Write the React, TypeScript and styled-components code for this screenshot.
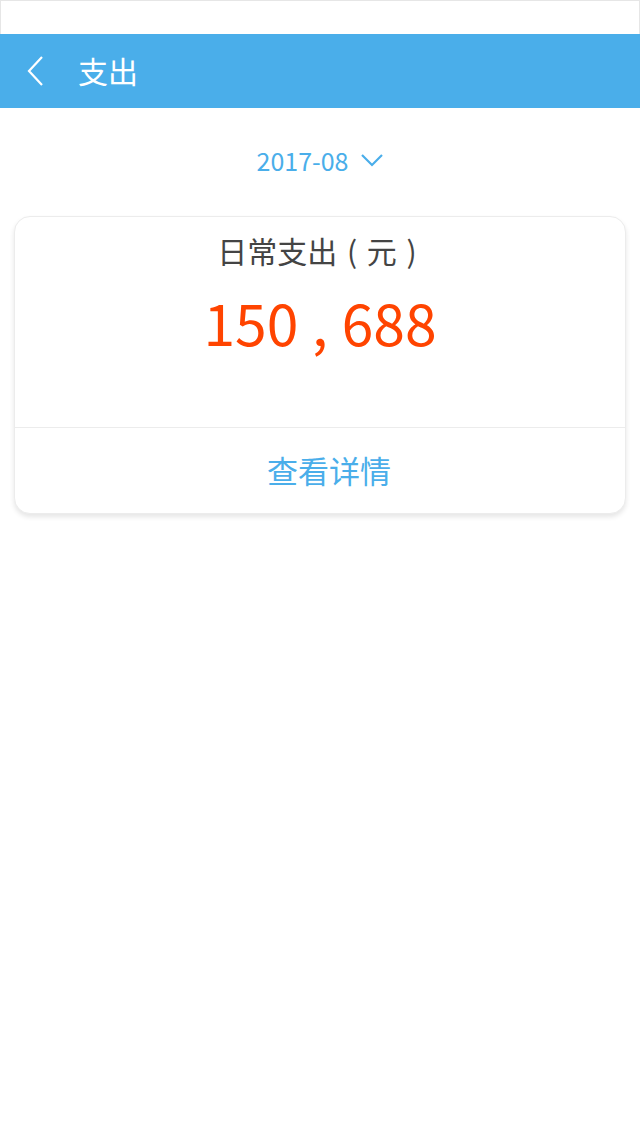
import React from "react";
import styled, { createGlobalStyle } from "styled-components";

const GlobalStyle = createGlobalStyle`
  html, body {
    margin: 0;
    padding: 0;
    background: #ffffff;
  }
  body {
    font-family: "Noto Sans CJK SC", "Noto Sans", sans-serif;
  }
`;

const Page = styled.div`
  width: 640px;
  min-height: 1136px;
  background: #ffffff;
  display: flex;
  flex-direction: column;
`;

const StatusBar = styled.div`
  height: 34px;
  box-sizing: border-box;
  border: 1px solid #e6e6e6;
  border-bottom: none;
  background: #ffffff;
`;

const Header = styled.div`
  height: 74px;
  background: #4aaeea;
  display: flex;
  align-items: center;
  padding-left: 26px;
  color: #ffffff;
`;

const BackButton = styled.div`
  width: 20px;
  height: 34px;
  display: flex;
  align-items: center;
`;

const Title = styled.div`
  margin-left: 32px;
  font-size: 30px;
  line-height: 1;
  margin-top: -2px;
`;

const DateRow = styled.div`
  height: 104px;
  padding-bottom: 4px;
  display: flex;
  align-items: center;
  justify-content: center;
  gap: 13px;
  color: #4aaeea;
  font-size: 25px;
`;

const DateText = styled.span`
  font-family: "Noto Sans CJK SC", sans-serif;
`;

const Card = styled.div`
  margin: 0 14px;
  border-radius: 16px;
  background: #ffffff;
  border: 1px solid #ececec;
  box-shadow: 0 3px 5px rgba(0, 0, 0, 0.1);
  display: flex;
  flex-direction: column;
  overflow: hidden;
`;

const CardBody = styled.div`
  height: 210px;
  display: flex;
  flex-direction: column;
  align-items: center;
  border-bottom: 1px solid #ececec;
`;

const CardLabel = styled.div`
  margin-top: 11px;
  font-size: 30px;
  line-height: 44px;
  color: #444444;
  white-space: pre;
  word-spacing: 3px;
  padding-right: 6px;
`;

const Amount = styled.div`
  margin-top: 17px;
  font-size: 57px;
  line-height: 64px;
  color: #ff4400;
  white-space: pre;
  word-spacing: 1px;
`;

const DetailLink = styled.div`
  height: 82px;
  display: flex;
  align-items: center;
  justify-content: center;
  font-size: 31px;
  color: #4aaeea;
  padding-left: 18px;
  padding-bottom: 3px;
`;

const App = () => {
  return (
    <Page>
      <GlobalStyle />
      <StatusBar />
      <Header>
        <BackButton>
          <svg width="18" height="32" viewBox="0 0 18 32">
            <polyline
              points="16,2 3,16 16,30"
              fill="none"
              stroke="#ffffff"
              strokeWidth="2.2"
            />
          </svg>
        </BackButton>
        <Title>支出</Title>
      </Header>
      <DateRow>
        <DateText>2017-08</DateText>
        <svg width="22" height="14" viewBox="0 0 22 14">
          <polyline
            points="1,2 11,12 21,2"
            fill="none"
            stroke="#4aaeea"
            strokeWidth="2.2"
          />
        </svg>
      </DateRow>
      <Card>
        <CardBody>
          <CardLabel>日常支出 ( 元 )</CardLabel>
          <Amount>150 , 688</Amount>
        </CardBody>
        <DetailLink>查看详情</DetailLink>
      </Card>
    </Page>
  );
};

export default App;
